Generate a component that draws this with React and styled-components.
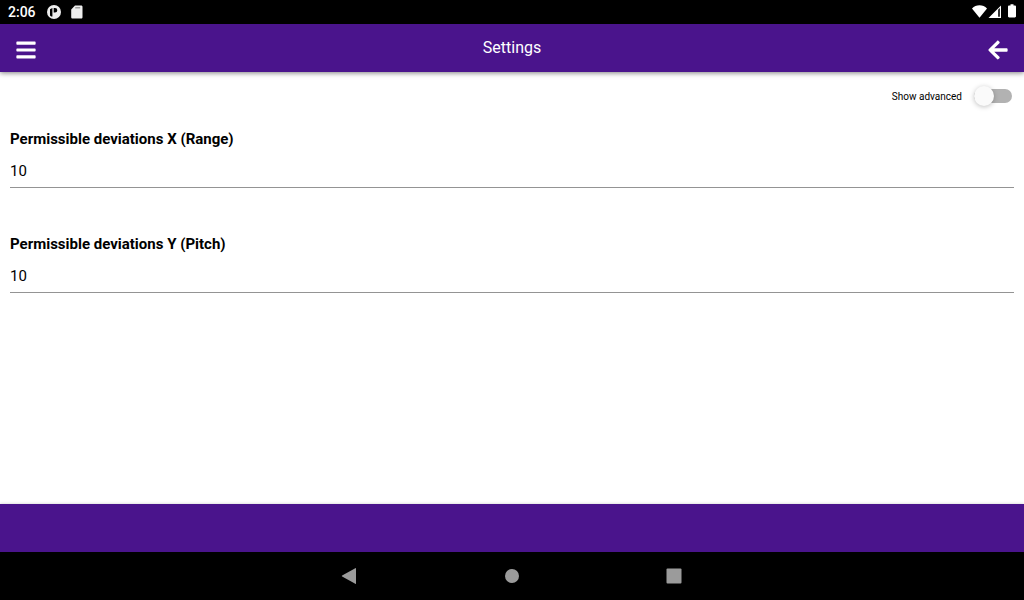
import React, { useState } from 'react';
import styled, { createGlobalStyle } from 'styled-components';
import { FaBars, FaArrowLeft } from 'react-icons/fa';

const GlobalStyle = createGlobalStyle`
    * {
        box-sizing: border-box;
    }

    body {
        margin: 0;
        background: #fff;
        color: #000;
        font-family: Roboto, 'Liberation Sans', sans-serif;
    }
`;

const Screen = styled.div`
    display: flex;
    flex-direction: column;
    min-height: 100vh;
`;

const StatusBar = styled.div`
    display: flex;
    align-items: center;
    justify-content: space-between;
    height: 24px;
    padding: 0 8px;
    background: #000;
    color: #fff;
`;

const StatusGroup = styled.div`
    display: flex;
    align-items: center;
    gap: ${props => props.$gap}px;
`;

const Clock = styled.span`
    font-size: 14px;
    font-weight: 500;
    line-height: 24px;
`;

const Header = styled.header`
    display: grid;
    grid-template-columns: 1fr auto 1fr;
    align-items: center;
    height: 48px;
    padding: 0 15px;
    background: #4a148c;
    color: #fff;
    box-shadow: 0 1px 5px rgba(0, 0, 0, 0.5);
`;

const Title = styled.h1`
    margin: 0;
    font-size: 16px;
    font-weight: 400;
    line-height: 48px;
`;

const IconButton = styled.button`
    display: flex;
    justify-self: ${props => props.$side};
    padding: 4px 0 0;
    border: 0;
    background: none;
    color: inherit;
    font-size: 22px;
    cursor: pointer;
`;

const Content = styled.main`
    flex: 1;
    padding: 12px 10px;
`;

const AdvancedRow = styled.label`
    display: flex;
    align-items: center;
    justify-content: flex-end;
    gap: 12px;
    height: 24px;
    padding-right: 2px;
    font-size: 10px;
`;

const Switch = styled.input`
    appearance: none;
    display: flex;
    align-items: center;
    width: 38px;
    height: 14px;
    margin: 0;
    border-radius: 7px;
    background: ${props => props.checked ? '#a489c5' : '#b2b2b2'};
    cursor: pointer;

    &::before {
        content: '';
        width: 20px;
        height: 20px;
        margin-left: ${props => props.checked ? '18px' : '0'};
        border-radius: 50%;
        background: ${props => props.checked ? '#4a148c' : '#fafafa'};
        box-shadow: 0 1px 5px rgba(0, 0, 0, 0.25);
    }
`;

const Field = styled.div`
    display: flex;
    flex-direction: column;
    margin-top: 20px;
    padding-bottom: 25px;
`;

const FieldLabel = styled.label`
    font-size: 15px;
    font-weight: 700;
    line-height: 22px;
`;

const FieldInput = styled.input`
    width: 100%;
    height: 38px;
    padding: 10px 0 6px;
    border: 0;
    border-bottom: 1px solid #949494;
    border-radius: 0;
    outline: 0;
    background: none;
    color: #000;
    font-family: inherit;
    font-size: 15px;
`;

const Footer = styled.footer`
    height: 48px;
    background: #4a148c;
    box-shadow: 0 0 3px rgba(0, 0, 0, 0.2);
`;

const NavBar = styled.nav`
    display: flex;
    align-items: center;
    justify-content: center;
    gap: 138px;
    height: 48px;
    background: #000;
`;

const NavButton = styled.button`
    display: flex;
    padding: 0;
    border: 0;
    background: none;
    color: #9b9b9b;
    cursor: pointer;
`;

function StatusIcon({ width, height = 16, children }) {
    return (
        <svg width={width} height={height} viewBox={`0 0 ${width} ${height}`} fill='#fff' aria-hidden='true'>
            {children}
        </svg>
    );
}

function Status() {
    return (
        <StatusBar>
            <StatusGroup $gap={10}>
                <Clock>2:06</Clock>
                <StatusIcon width={15}>
                    <circle cx='8' cy='8' r='7' fill='#eee' />
                    <path d='M4 5.2 6.4 4v8.600H5.200L4 11.400zM7.700 4h1.300a2.300 2.300 0 0 1 0 4.600H7.700z' fill='#000' />
                </StatusIcon>
                <StatusIcon width={12}>
                    <path d='M4 1.500h6.200c.7 0 1.300.6 1.300 1.300v10.500c0 .7-.6 1.300-1.300 1.300H1.500c-.7 0-1.300-.6-1.300-1.300V5.500z' fill='#eee' />
                    <path d='M4.200 3.200h5v1.200h-5z' fill='#888' />
                </StatusIcon>
            </StatusGroup>
            <StatusGroup $gap={1}>
                <StatusIcon width={16}>
                    <path d='M8.500 13.700 1 4.400C3 2.400 5.600 1.300 8.500 1.300s5.500 1.100 7.500 3.100z' />
                </StatusIcon>
                <StatusIcon width={13}>
                    <path d='M13 1.500v12.500H.5z' />
                    <path d='M10.200 5.700l1.600-1.600v8.700h-1.600z' fill='#000' />
                </StatusIcon>
                <StatusIcon width={14}>
                    <path d='M8.500.2h3v1.200h1.300c.7 0 1.200.5 1.200 1.100v9.800c0 .6-.5 1.100-1.200 1.100H7.200c-.7 0-1.200-.5-1.200-1.100V2.500c0-.6.5-1.100 1.200-1.100h1.300z' />
                </StatusIcon>
            </StatusGroup>
        </StatusBar>
    );
}

function Setting({ id, label, defaultValue }) {
    return (
        <Field>
            <FieldLabel htmlFor={id}>{label}</FieldLabel>
            <FieldInput id={id} type='text' inputMode='numeric' defaultValue={defaultValue} />
        </Field>
    );
}

function SystemNav() {
    return (
        <NavBar>
            <NavButton aria-label='Back'>
                <svg width='24' height='24' viewBox='0 0 24 24' fill='currentColor'>
                    <path d='M18 4.600v14.800q0 .8-.7.400L4.100 12.500q-.8-.5 0-1L17.300 4.200q.7-.4.700.400z' />
                </svg>
            </NavButton>
            <NavButton aria-label='Home'>
                <svg width='24' height='24' viewBox='0 0 24 24' fill='currentColor'>
                    <circle cx='12' cy='12' r='7' />
                </svg>
            </NavButton>
            <NavButton aria-label='Overview'>
                <svg width='24' height='24' viewBox='0 0 24 24' fill='currentColor'>
                    <rect x='4.500' y='4.500' width='15' height='15' rx='1' />
                </svg>
            </NavButton>
        </NavBar>
    );
}

function App() {
    const [ advanced, setAdvanced ] = useState(false);

    return (
        <Screen>
            <GlobalStyle />
            <Status />
            <Header>
                <IconButton $side='start' aria-label='Menu'><FaBars /></IconButton>
                <Title>Settings</Title>
                <IconButton $side='end' aria-label='Go back'><FaArrowLeft /></IconButton>
            </Header>
            <Content>
                <AdvancedRow>
                    Show advanced
                    <Switch type='checkbox' checked={advanced} onChange={e => setAdvanced(e.target.checked)} />
                </AdvancedRow>
                <Setting id='deviation-x' label='Permissible deviations X (Range)' defaultValue='10' />
                <Setting id='deviation-y' label='Permissible deviations Y (Pitch)' defaultValue='10' />
            </Content>
            <Footer />
            <SystemNav />
        </Screen>
    );
}

export default App;
